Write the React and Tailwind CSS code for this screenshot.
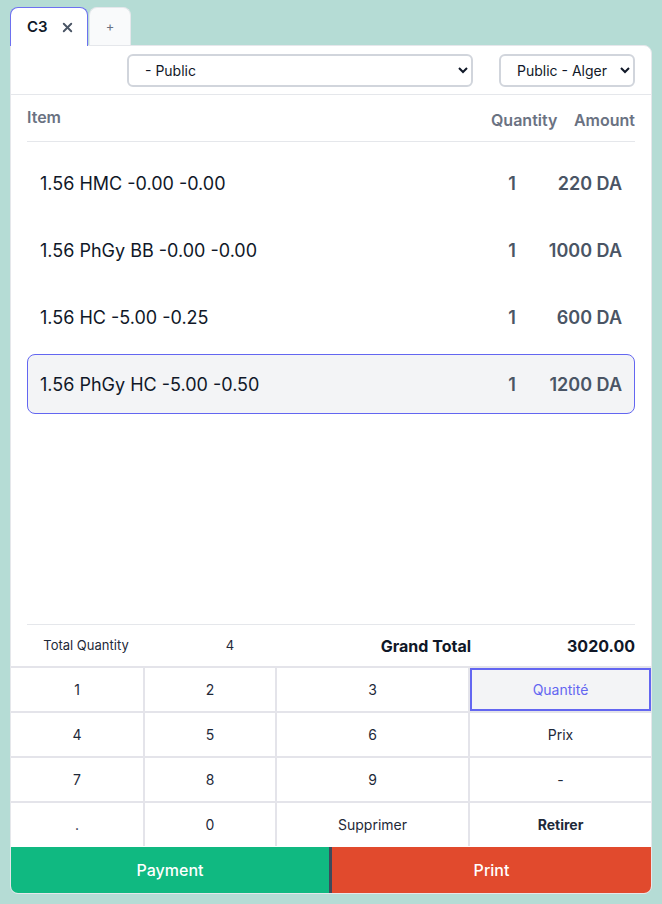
import React from 'react';
import { X } from 'lucide-react';

// --- POS ticket screen ---
const items = [
    { name: '1.56 HMC -0.00 -0.00', qty: 1, amount: '220 DA' },
    { name: '1.56 PhGy BB -0.00 -0.00', qty: 1, amount: '1000 DA' },
    { name: '1.56 HC -5.00 -0.25', qty: 1, amount: '600 DA' },
    { name: '1.56 PhGy HC -5.00 -0.50', qty: 1, amount: '1200 DA', active: true }
];

const keys = [
    { label: '1' }, { label: '2' }, { label: '3' }, { label: 'Quantité', active: true },
    { label: '4' }, { label: '5' }, { label: '6' }, { label: 'Prix' },
    { label: '7' }, { label: '8' }, { label: '9' }, { label: '-' },
    { label: '.' }, { label: '0' }, { label: 'Supprimer' }, { label: 'Retirer', bold: true }
];

const App = () => {
    return (
        <div className="h-[904px] w-[662px] bg-[#b5dcd5] px-[10px] pt-[7px] font-['Inter',sans-serif] text-gray-900">
            {/* Tabs */}
            <div className="flex h-[38px] items-stretch">
                <div className="relative z-10 -mb-px flex w-[78px] items-center gap-3 rounded-t-lg border border-b-0 border-[#6d70f0] bg-white pl-4">
                    <span className="text-[15px] font-semibold">C3</span>
                    <X size={15} strokeWidth={3} className="text-gray-600" />
                </div>
                <div className="ml-px flex w-[42px] items-center justify-center rounded-t-lg border border-b-0 border-gray-200 bg-gray-50 text-[13px] text-gray-500">
                    +
                </div>
            </div>

            {/* Card */}
            <div className="flex h-[849px] w-[642px] flex-col overflow-hidden rounded-tr-lg rounded-b-lg border border-gray-200 bg-white">
                <div className="flex h-[49px] shrink-0 items-center justify-end gap-[26px] border-b border-gray-200 pr-4">
                    <select className="h-[33px] w-[346px] rounded-md border-2 border-gray-300 bg-white pl-3 pr-2 text-[14px] text-gray-900">
                        <option>- Public</option>
                    </select>
                    <select className="h-[33px] w-[136px] rounded-md border-2 border-gray-300 bg-white pl-3 pr-2 text-[14px] text-gray-900">
                        <option>Public - Alger</option>
                    </select>
                </div>

                <div className="flex min-h-0 flex-1 flex-col px-4">
                    {/* Column header */}
                    <div className="flex h-[47px] shrink-0 items-center border-b border-gray-200 pt-[4px] text-[16px] font-semibold text-gray-500">
                        <span className="mb-[6px] flex-1">Item</span>
                        <span className="w-[66px] text-center">Quantity</span>
                        <span className="w-[78px] text-right">Amount</span>
                    </div>

                    {/* Lines */}
                    <div className="flex flex-1 flex-col gap-[7px] pt-[11px]">
                        {items.map((it, i) => (
                            <div
                                key={i}
                                className={
                                    it.active
                                        ? 'flex h-[60px] items-center rounded-lg border border-[#6366f1] bg-gray-100 px-3'
                                        : 'flex h-[60px] items-center rounded-lg border border-transparent px-3'
                                }
                            >
                                <span className="flex-1 text-[18px] text-gray-900">{it.name}</span>
                                <span className="w-[40px] text-center text-[18px] font-semibold text-gray-600">{it.qty}</span>
                                <span className="w-[90px] text-right text-[18px] font-semibold text-gray-600">{it.amount}</span>
                            </div>
                        ))}
                    </div>

                    {/* Totals */}
                    <div className="flex h-[42px] shrink-0 items-center border-t border-gray-200">
                        <span className="w-[118px] text-center text-[13px] text-gray-800">Total Quantity</span>
                        <span className="w-[170px] text-center text-[13px] text-gray-800">4</span>
                        <span className="flex-1 text-right text-[16px] font-bold text-gray-900">Grand Total</span>
                        <span className="w-[164px] text-right text-[16px] font-bold text-gray-900">3020.00</span>
                    </div>
                </div>

                {/* Keypad */}
                <div className="grid h-[180px] shrink-0 grid-cols-[132px_130px_191px_181px] grid-rows-4 gap-[2px] border-t border-[#e4e4ea] bg-[#e4e4ea] pt-px">
                    {keys.map((k, i) => (
                        <div
                            key={i}
                            className={
                                k.active
                                    ? 'flex items-center justify-center bg-gray-100 text-[14px] text-[#6366f1] ring-2 ring-inset ring-[#6366f1]'
                                    : k.bold
                                      ? 'flex items-center justify-center bg-white text-[14px] font-bold text-gray-800'
                                      : 'flex items-center justify-center bg-white text-[14px] text-gray-800'
                            }
                        >
                            {k.label}
                        </div>
                    ))}
                </div>

                {/* Actions */}
                <div className="flex h-[47px] shrink-0 pt-px">
                    <button className="flex w-[318px] items-center justify-center bg-[#10b981] text-[16px] font-medium text-white">
                        Payment
                    </button>
                    <button className="flex flex-1 items-center justify-center border-l-[3px] border-[#3d4a5c] bg-[#e14a2d] text-[16px] font-medium text-white">
                        Print
                    </button>
                </div>
            </div>
        </div>
    );
};

export default App;
